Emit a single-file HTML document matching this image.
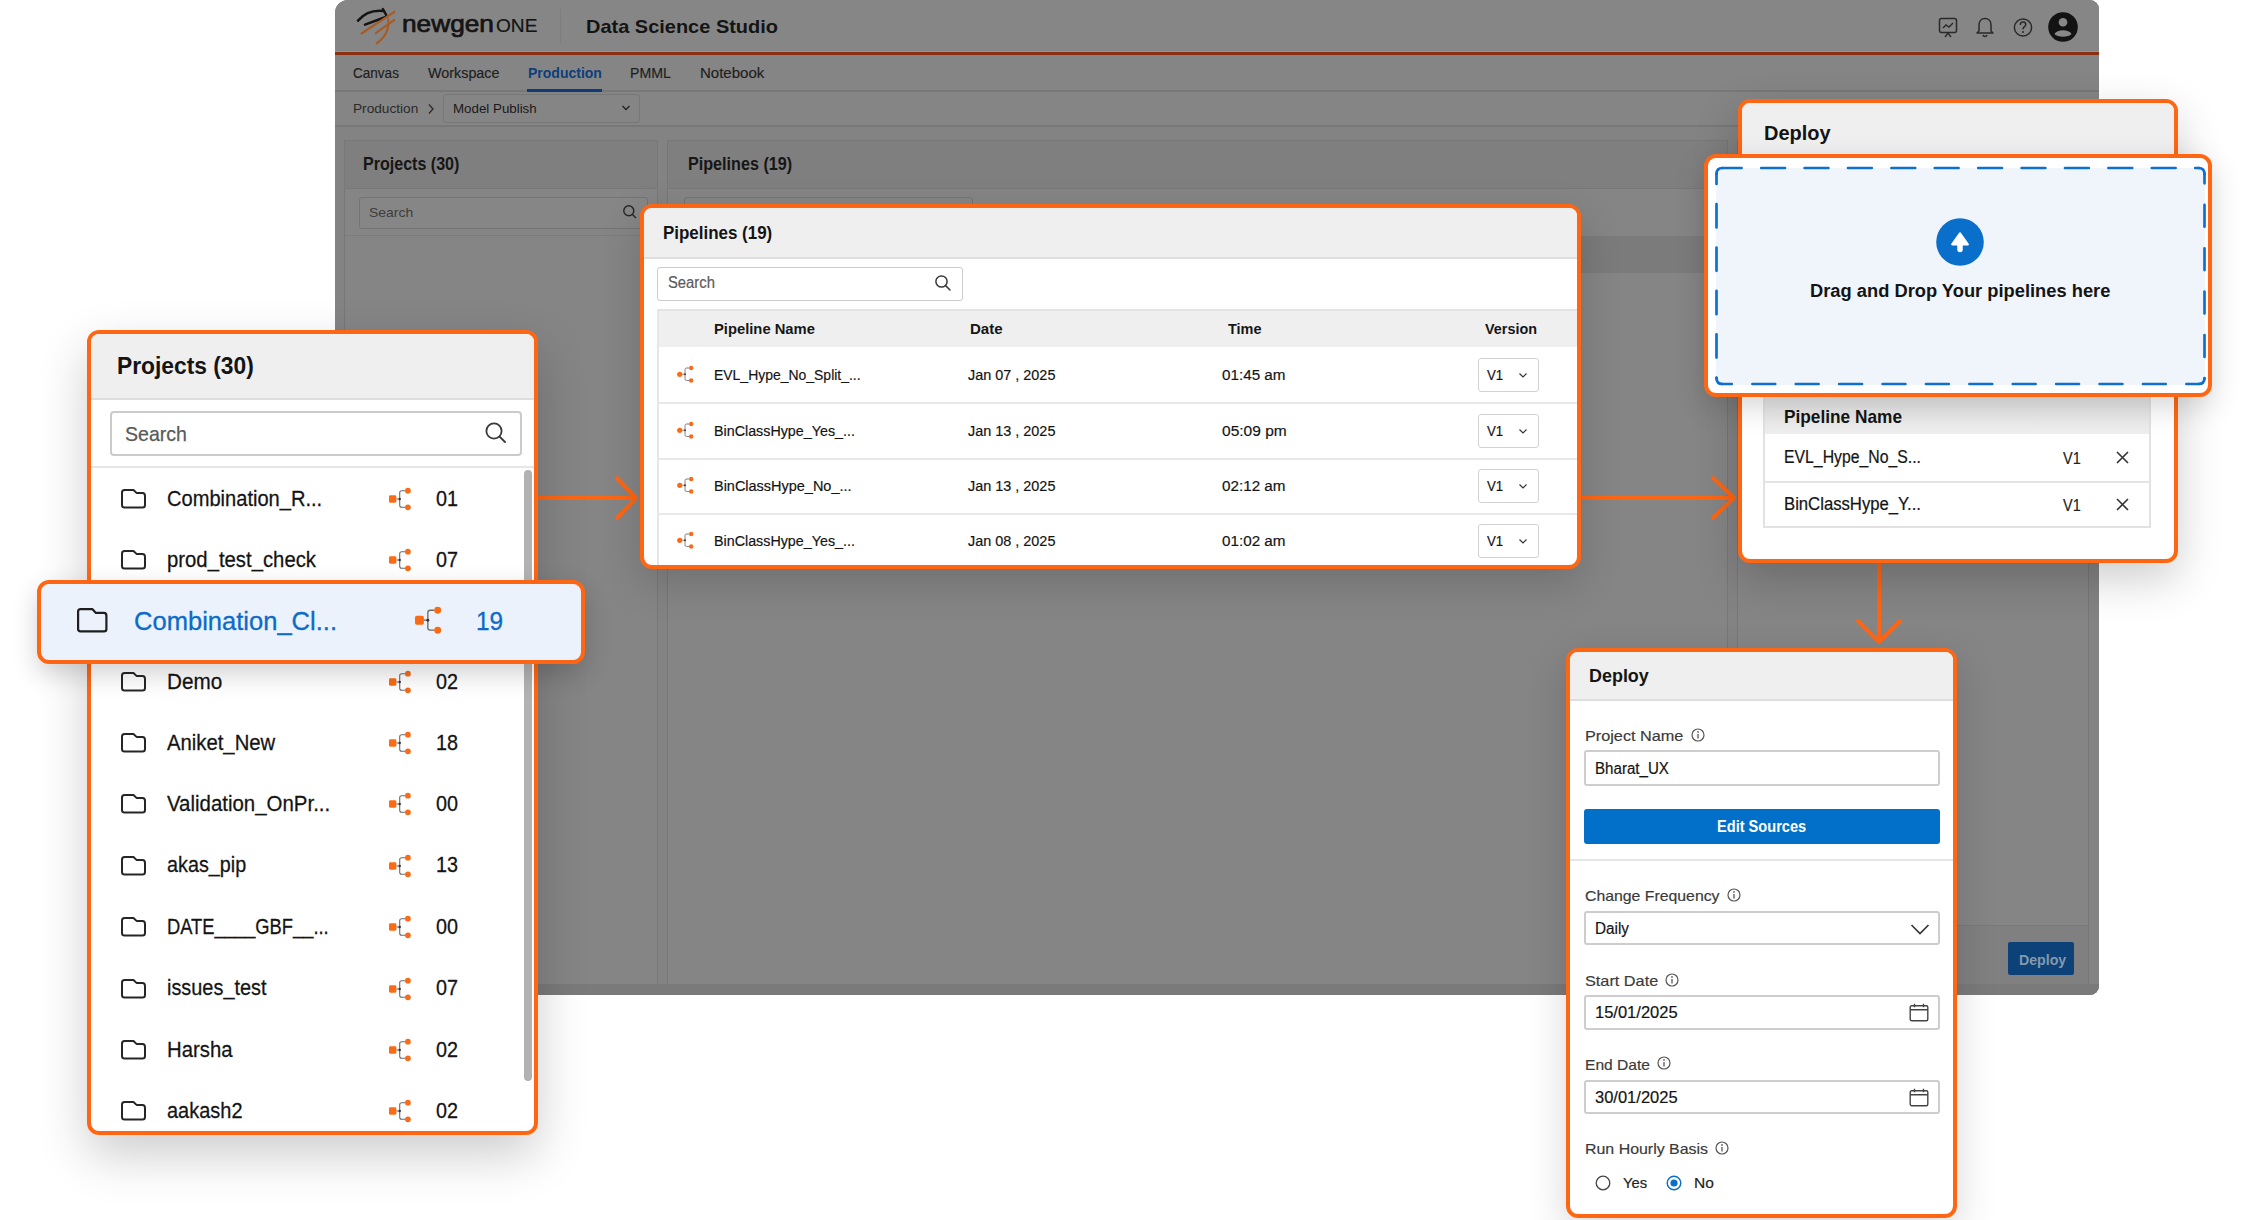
<!DOCTYPE html>
<html><head><meta charset="utf-8">
<style>
*{box-sizing:border-box;margin:0;padding:0}
html,body{width:2252px;height:1220px;overflow:hidden;background:#fff;font-family:"Liberation Sans",sans-serif;color:#141414}
.a{position:absolute}
.t{position:absolute;white-space:nowrap;line-height:1;transform-origin:0 0}
svg{overflow:visible}
.pop{position:absolute;background:#fff;border:4px solid #ff6613;border-radius:12px;overflow:hidden}
.shd{position:absolute;border-radius:12px}
</style></head><body>
<div class="a" style="left:335px;top:0;width:1764px;height:995px;background:#848484;border-radius:13px 9px 9px 13px;overflow:hidden">
<div class="a" style="left:0.00px;top:0.00px;width:1764.00px;height:52.00px;background:#868686"></div>
<div class="a" style="left:0.00px;top:51.00px;width:1764.00px;height:1.00px;background:#8c979c"></div>
<div class="a" style="left:0.00px;top:52.00px;width:1764.00px;height:3.00px;background:#8a3010"></div>
<div class="a" style="left:0.00px;top:55.00px;width:1764.00px;height:36.00px;background:#858585"></div>
<div class="a" style="left:0.00px;top:90.00px;width:1764.00px;height:2.00px;background:#787878"></div>
<div class="a" style="left:0.00px;top:92.00px;width:1764.00px;height:34.00px;background:#858585"></div>
<div class="a" style="left:0.00px;top:125.00px;width:1764.00px;height:2.00px;background:#787878"></div>
<div class="a" style="left:0.00px;top:127.00px;width:1764.00px;height:868.00px;background:#838383"></div>
<div class="a" style="left:9.00px;top:140.00px;width:314.00px;height:845.00px;background:#858585;border:1.5px solid #777"></div>
<div class="a" style="left:332.00px;top:140.00px;width:1061.00px;height:845.00px;background:#858585;border:1.5px solid #777"></div>
<div class="a" style="left:1402.00px;top:140.00px;width:352.00px;height:845.00px;background:#858585;border:1.5px solid #777"></div>
<div class="a" style="left:9.00px;top:140.00px;width:314.00px;height:49.00px;background:#7f7f7f;border:1.5px solid #787878"></div>
<div class="a" style="left:332.00px;top:140.00px;width:1061.00px;height:49.00px;background:#7f7f7f;border:1.5px solid #787878"></div>
<div class="a" style="left:0.00px;top:984.00px;width:1764.00px;height:11.00px;background:#7a7a7a"></div>
<svg class="a" style="left:20.00px;top:5.00px" width="42" height="42" viewBox="0 0 42 42"><path d="M3 15.6 Q13 4 29 6" stroke="#141414" stroke-width="2.6" fill="none" stroke-linecap="round"/>
<path d="M10 19.6 L31.4 11.7" stroke="#141414" stroke-width="2.6" fill="none" stroke-linecap="round"/>
<path d="M27.9 4.1 L31.4 10.3" stroke="#141414" stroke-width="2.4" fill="none" stroke-linecap="round"/>
<path d="M6.5 28.5 L39.4 6.8" stroke="#a85b25" stroke-width="2.1" fill="none" stroke-linecap="round"/>
<path d="M20.8 28.1 L39.4 14.8" stroke="#a85b25" stroke-width="2.1" fill="none" stroke-linecap="round"/>
<path d="M33.2 14.3 Q35 29 21.6 38.3" stroke="#a85b25" stroke-width="2.1" fill="none" stroke-linecap="round"/></svg>
<div class="t" style="left:67.00px;top:13.13px;font-size:23px;color:#141414;-webkit-text-stroke:0.28px #141414;transform:scaleX(1.1406);-webkit-text-stroke:0.7px #141414;">newgen</div>
<div class="t" style="left:160.60px;top:16.94px;font-size:18.5px;color:#141414;-webkit-text-stroke:0.22px #141414;transform:scaleX(1.0327);">ONE</div>
<div class="a" style="left:225.00px;top:9.00px;width:1.00px;height:34.00px;background:#7d7d7d"></div>
<div class="t" style="left:251.00px;top:18.34px;font-size:18.5px;color:#141414;font-weight:bold;transform:scaleX(1.0795);">Data Science Studio</div>
<svg class="a" style="left:1603.00px;top:17.00px" width="20" height="21" viewBox="0 0 20 21"><rect x="1.5" y="1.5" width="17" height="14" rx="2" stroke="#2a2a2a" stroke-width="1.5" fill="none"/><path d="M5 11 L8 8 L11 10 L15 6" stroke="#2a2a2a" stroke-width="1.4" fill="none"/><path d="M7 20 L10 16 L13 20" stroke="#2a2a2a" stroke-width="1.4" fill="none"/></svg>
<svg class="a" style="left:1640.00px;top:16.00px" width="20" height="22" viewBox="0 0 20 22"><path d="M4 15 L4 9 C4 5 6.5 2.5 10 2.5 C13.5 2.5 16 5 16 9 L16 15 L18 17 L2 17 Z" stroke="#2a2a2a" stroke-width="1.5" fill="none" stroke-linejoin="round"/><path d="M8 19 C8.5 21 11.5 21 12 19" stroke="#2a2a2a" stroke-width="1.5" fill="none"/></svg>
<svg class="a" style="left:1678.00px;top:17.00px" width="20" height="21" viewBox="0 0 20 21"><circle cx="10" cy="10.5" r="8.6" stroke="#2a2a2a" stroke-width="1.5" fill="none"/><path d="M7.3 8 C7.3 6 8.6 5 10 5 C11.6 5 12.8 6.1 12.8 7.6 C12.8 9.6 10 9.8 10 12.2" stroke="#2a2a2a" stroke-width="1.5" fill="none"/><circle cx="10" cy="15" r="1" fill="#2a2a2a"/></svg>
<svg class="a" style="left:1713.00px;top:12.00px" width="30" height="30" viewBox="0 0 30 30"><circle cx="15" cy="15" r="14.8" fill="#131313"/><circle cx="15" cy="10.3" r="4.3" fill="#888"/><path d="M6.5 22 C9 17 21 17 23.5 22 C21 25.5 9 25.5 6.5 22 Z" fill="#888"/></svg>
<div class="t" style="left:18.30px;top:65.75px;font-size:14px;color:#1e1e1e;-webkit-text-stroke:0.17px #1e1e1e;transform:scaleX(0.9669);">Canvas</div>
<div class="t" style="left:92.80px;top:65.75px;font-size:14px;color:#1e1e1e;-webkit-text-stroke:0.17px #1e1e1e;transform:scaleX(1.0248);">Workspace</div>
<div class="t" style="left:192.50px;top:65.75px;font-size:14px;color:#0d3f7c;font-weight:bold;transform:scaleX(1.0002);">Production</div>
<div class="t" style="left:295.00px;top:65.75px;font-size:14px;color:#1e1e1e;-webkit-text-stroke:0.17px #1e1e1e;transform:scaleX(1.0111);">PMML</div>
<div class="t" style="left:364.50px;top:65.75px;font-size:14px;color:#1e1e1e;-webkit-text-stroke:0.17px #1e1e1e;transform:scaleX(1.0729);">Notebook</div>
<div class="a" style="left:192.00px;top:89.00px;width:75.00px;height:3.00px;background:#0e3c78"></div>
<div class="t" style="left:18.30px;top:101.97px;font-size:13.5px;color:#2b2b2b;transform:scaleX(1.0117);">Production</div>
<svg class="a" style="left:92.00px;top:103.00px" width="8" height="12" viewBox="0 0 8 12"><path d="M2 1.5 L6 6 L2 10.5" stroke="#2b2b2b" stroke-width="1.3" fill="none"/></svg>
<div class="a" style="left:108.00px;top:94.00px;width:197.00px;height:29.00px;border:1px solid #777;border-radius:3px"></div>
<div class="t" style="left:118.40px;top:101.97px;font-size:13.5px;color:#1a1a1a;transform:scaleX(0.9870);">Model Publish</div>
<svg class="a" style="left:286.00px;top:104.00px" width="10" height="8" viewBox="0 0 10 8"><path d="M1.5 2 L5 5.5 L8.5 2" stroke="#222" stroke-width="1.3" fill="none"/></svg>
<div class="t" style="left:28.40px;top:155.68px;font-size:17.5px;color:#161616;font-weight:bold;transform:scaleX(0.9177);">Projects (30)</div>
<div class="a" style="left:24.00px;top:196.50px;width:289.00px;height:32.00px;border:1px solid #747474;border-radius:3px;background:#868686"></div>
<div class="t" style="left:33.80px;top:205.97px;font-size:13.5px;color:#3d3d3d;transform:scaleX(1.0333);">Search</div>
<svg class="a" style="left:287.00px;top:204.00px" width="16" height="16" viewBox="0 0 16 16"><circle cx="6.8" cy="6.8" r="5" stroke="#262626" stroke-width="1.4" fill="none"/><path d="M10.5 10.5 L14 14" stroke="#262626" stroke-width="1.4"/></svg>
<div class="a" style="left:10.00px;top:234.50px;width:312.00px;height:1.00px;background:#7b7b7b"></div>
<div class="t" style="left:353.40px;top:156.38px;font-size:17.5px;color:#161616;font-weight:bold;transform:scaleX(0.9227);">Pipelines (19)</div>
<div class="a" style="left:349.00px;top:196.50px;width:289.00px;height:32.00px;border:1px solid #747474;border-radius:3px"></div>
<div class="a" style="left:333.00px;top:236.00px;width:1059.00px;height:37.00px;background:#7b7b7b"></div>
<div class="a" style="left:1403.00px;top:925.00px;width:350.00px;height:59.00px;background:#808080;border-top:1px solid #7a7a7a"></div>
<div class="a" style="left:1673.00px;top:942.00px;width:66.00px;height:33.00px;background:#0c4277;border-radius:2px"></div>
<div class="t" style="left:1683.80px;top:952.72px;font-size:14.5px;color:#8399ae;font-weight:bold;transform:scaleX(0.9763);">Deploy</div>
</div>
<svg class="a" style="left:0;top:0" width="2252" height="1220" viewBox="0 0 2252 1220">
<g stroke="#ff6613" stroke-width="4" fill="none" stroke-linecap="round" stroke-linejoin="round">
<path d="M538 498 L636 498 M617 478 L636 498 L617 518"/>
<path d="M1581 498 L1734 498 M1713 478 L1734 498 L1713 518"/>
<path d="M1879 563 L1879 641 M1858 621 L1879 642 L1900 621"/>
</g></svg>
<div class="shd" style="left:87px;top:329.5px;width:451px;height:805px;box-shadow:0 20px 50px rgba(0,0,0,0.20)"></div>
<div class="pop" style="left:87px;top:329.5px;width:451px;height:805px">
<div class="a" style="left:-4.00px;top:-4.00px;width:451.00px;height:68.50px;background:#efefef"></div>
<div class="a" style="left:-4.00px;top:64.50px;width:451.00px;height:2.00px;background:#dedede"></div>
<div class="t" style="left:26.00px;top:21.03px;font-size:23px;color:#141414;font-weight:bold;transform:scaleX(0.9909);">Projects (30)</div>
<div class="a" style="left:19.00px;top:77.00px;width:411.50px;height:45.50px;border:2px solid #cbcbcb;border-radius:4px"></div>
<div class="t" style="left:34.20px;top:89.92px;font-size:21px;color:#5a5a5a;-webkit-text-stroke:0.25px #5a5a5a;transform:scaleX(0.9318);">Search</div>
<svg class="a" style="left:393.00px;top:87.50px" width="24" height="24" viewBox="0 0 24 24"><circle cx="10" cy="10" r="7.6" stroke="#3a3a3a" stroke-width="1.8" fill="none"/><path d="M15.6 15.6 L21 21" stroke="#3a3a3a" stroke-width="1.9" stroke-linecap="round"/></svg>
<div class="a" style="left:-4.00px;top:132.00px;width:451.00px;height:2.00px;background:#e6e6e6"></div>
<div class="a" style="left:433.00px;top:136.50px;width:8.00px;height:611.00px;background:#b2b2b2;border-radius:4px"></div>
<svg class="a" style="left:30.00px;top:155.40px" width="25" height="19.5" viewBox="0 0 25 19.5"><path d="M1.0 16.0 L1.0 3.5 Q1.0 1.0 3.5 1.0 L12.5 1.0 L15.5 3.9000000000000004 L21.5 3.9000000000000004 Q24.0 3.9000000000000004 24.0 6.9 L24.0 16.0 Q24.0 18.5 21.5 18.5 L3.5 18.5 Q1.0 18.5 1.0 16.0 Z" stroke="#262626" stroke-width="2.0" fill="none" stroke-linejoin="round"/></svg>
<div class="t" style="left:75.80px;top:154.27px;font-size:22px;color:#141414;-webkit-text-stroke:0.26px #141414;transform:scaleX(0.9131);">Combination_R...</div>
<svg class="a" style="left:298.00px;top:154.40px" width="24.0" height="22.0" viewBox="0 0 24.0 22.0"><rect x="0" y="7.3" width="7.4" height="7.4" rx="1.4" fill="#fb6a14"/><path d="M7.4 11.0 L10.7 11.0 M13.5 2.6999999999999993 L12.7 2.6999999999999993 Q10.7 2.6999999999999993 10.7 4.7 L10.7 17.3 Q10.7 19.3 12.7 19.3 L16.0 19.3 M13.0 2.6999999999999993 L16.0 2.6999999999999993" stroke="#6a6a6a" stroke-width="1.1" fill="none"/><circle cx="10.7" cy="11.0" r="1.2" fill="#333"/><circle cx="18.9" cy="2.6999999999999993" r="2.9" fill="#fb6a14"/><circle cx="18.9" cy="19.3" r="2.9" fill="#fb6a14"/></svg>
<div class="t" style="left:345.00px;top:154.27px;font-size:22px;color:#141414;-webkit-text-stroke:0.26px #141414;transform:scaleX(0.8990);">01</div>
<svg class="a" style="left:30.00px;top:216.60px" width="25" height="19.5" viewBox="0 0 25 19.5"><path d="M1.0 16.0 L1.0 3.5 Q1.0 1.0 3.5 1.0 L12.5 1.0 L15.5 3.9000000000000004 L21.5 3.9000000000000004 Q24.0 3.9000000000000004 24.0 6.9 L24.0 16.0 Q24.0 18.5 21.5 18.5 L3.5 18.5 Q1.0 18.5 1.0 16.0 Z" stroke="#262626" stroke-width="2.0" fill="none" stroke-linejoin="round"/></svg>
<div class="t" style="left:75.80px;top:215.47px;font-size:22px;color:#141414;-webkit-text-stroke:0.26px #141414;transform:scaleX(0.9230);">prod_test_check</div>
<svg class="a" style="left:298.00px;top:215.60px" width="24.0" height="22.0" viewBox="0 0 24.0 22.0"><rect x="0" y="7.3" width="7.4" height="7.4" rx="1.4" fill="#fb6a14"/><path d="M7.4 11.0 L10.7 11.0 M13.5 2.6999999999999993 L12.7 2.6999999999999993 Q10.7 2.6999999999999993 10.7 4.7 L10.7 17.3 Q10.7 19.3 12.7 19.3 L16.0 19.3 M13.0 2.6999999999999993 L16.0 2.6999999999999993" stroke="#6a6a6a" stroke-width="1.1" fill="none"/><circle cx="10.7" cy="11.0" r="1.2" fill="#333"/><circle cx="18.9" cy="2.6999999999999993" r="2.9" fill="#fb6a14"/><circle cx="18.9" cy="19.3" r="2.9" fill="#fb6a14"/></svg>
<div class="t" style="left:345.00px;top:215.47px;font-size:22px;color:#141414;-webkit-text-stroke:0.26px #141414;transform:scaleX(0.8990);">07</div>
<svg class="a" style="left:30.00px;top:338.90px" width="25" height="19.5" viewBox="0 0 25 19.5"><path d="M1.0 16.0 L1.0 3.5 Q1.0 1.0 3.5 1.0 L12.5 1.0 L15.5 3.9000000000000004 L21.5 3.9000000000000004 Q24.0 3.9000000000000004 24.0 6.9 L24.0 16.0 Q24.0 18.5 21.5 18.5 L3.5 18.5 Q1.0 18.5 1.0 16.0 Z" stroke="#262626" stroke-width="2.0" fill="none" stroke-linejoin="round"/></svg>
<div class="t" style="left:75.80px;top:337.77px;font-size:22px;color:#141414;-webkit-text-stroke:0.26px #141414;transform:scaleX(0.9406);">Demo</div>
<svg class="a" style="left:298.00px;top:337.90px" width="24.0" height="22.0" viewBox="0 0 24.0 22.0"><rect x="0" y="7.3" width="7.4" height="7.4" rx="1.4" fill="#fb6a14"/><path d="M7.4 11.0 L10.7 11.0 M13.5 2.6999999999999993 L12.7 2.6999999999999993 Q10.7 2.6999999999999993 10.7 4.7 L10.7 17.3 Q10.7 19.3 12.7 19.3 L16.0 19.3 M13.0 2.6999999999999993 L16.0 2.6999999999999993" stroke="#6a6a6a" stroke-width="1.1" fill="none"/><circle cx="10.7" cy="11.0" r="1.2" fill="#333"/><circle cx="18.9" cy="2.6999999999999993" r="2.9" fill="#fb6a14"/><circle cx="18.9" cy="19.3" r="2.9" fill="#fb6a14"/></svg>
<div class="t" style="left:345.00px;top:337.77px;font-size:22px;color:#141414;-webkit-text-stroke:0.26px #141414;transform:scaleX(0.8990);">02</div>
<svg class="a" style="left:30.00px;top:399.90px" width="25" height="19.5" viewBox="0 0 25 19.5"><path d="M1.0 16.0 L1.0 3.5 Q1.0 1.0 3.5 1.0 L12.5 1.0 L15.5 3.9000000000000004 L21.5 3.9000000000000004 Q24.0 3.9000000000000004 24.0 6.9 L24.0 16.0 Q24.0 18.5 21.5 18.5 L3.5 18.5 Q1.0 18.5 1.0 16.0 Z" stroke="#262626" stroke-width="2.0" fill="none" stroke-linejoin="round"/></svg>
<div class="t" style="left:75.80px;top:398.77px;font-size:22px;color:#141414;-webkit-text-stroke:0.26px #141414;transform:scaleX(0.9217);">Aniket_New</div>
<svg class="a" style="left:298.00px;top:398.90px" width="24.0" height="22.0" viewBox="0 0 24.0 22.0"><rect x="0" y="7.3" width="7.4" height="7.4" rx="1.4" fill="#fb6a14"/><path d="M7.4 11.0 L10.7 11.0 M13.5 2.6999999999999993 L12.7 2.6999999999999993 Q10.7 2.6999999999999993 10.7 4.7 L10.7 17.3 Q10.7 19.3 12.7 19.3 L16.0 19.3 M13.0 2.6999999999999993 L16.0 2.6999999999999993" stroke="#6a6a6a" stroke-width="1.1" fill="none"/><circle cx="10.7" cy="11.0" r="1.2" fill="#333"/><circle cx="18.9" cy="2.6999999999999993" r="2.9" fill="#fb6a14"/><circle cx="18.9" cy="19.3" r="2.9" fill="#fb6a14"/></svg>
<div class="t" style="left:345.00px;top:398.77px;font-size:22px;color:#141414;-webkit-text-stroke:0.26px #141414;transform:scaleX(0.8990);">18</div>
<svg class="a" style="left:30.00px;top:460.80px" width="25" height="19.5" viewBox="0 0 25 19.5"><path d="M1.0 16.0 L1.0 3.5 Q1.0 1.0 3.5 1.0 L12.5 1.0 L15.5 3.9000000000000004 L21.5 3.9000000000000004 Q24.0 3.9000000000000004 24.0 6.9 L24.0 16.0 Q24.0 18.5 21.5 18.5 L3.5 18.5 Q1.0 18.5 1.0 16.0 Z" stroke="#262626" stroke-width="2.0" fill="none" stroke-linejoin="round"/></svg>
<div class="t" style="left:75.80px;top:459.67px;font-size:22px;color:#141414;-webkit-text-stroke:0.26px #141414;transform:scaleX(0.9288);">Validation_OnPr...</div>
<svg class="a" style="left:298.00px;top:459.80px" width="24.0" height="22.0" viewBox="0 0 24.0 22.0"><rect x="0" y="7.3" width="7.4" height="7.4" rx="1.4" fill="#fb6a14"/><path d="M7.4 11.0 L10.7 11.0 M13.5 2.6999999999999993 L12.7 2.6999999999999993 Q10.7 2.6999999999999993 10.7 4.7 L10.7 17.3 Q10.7 19.3 12.7 19.3 L16.0 19.3 M13.0 2.6999999999999993 L16.0 2.6999999999999993" stroke="#6a6a6a" stroke-width="1.1" fill="none"/><circle cx="10.7" cy="11.0" r="1.2" fill="#333"/><circle cx="18.9" cy="2.6999999999999993" r="2.9" fill="#fb6a14"/><circle cx="18.9" cy="19.3" r="2.9" fill="#fb6a14"/></svg>
<div class="t" style="left:345.00px;top:459.67px;font-size:22px;color:#141414;-webkit-text-stroke:0.26px #141414;transform:scaleX(0.8990);">00</div>
<svg class="a" style="left:30.00px;top:522.00px" width="25" height="19.5" viewBox="0 0 25 19.5"><path d="M1.0 16.0 L1.0 3.5 Q1.0 1.0 3.5 1.0 L12.5 1.0 L15.5 3.9000000000000004 L21.5 3.9000000000000004 Q24.0 3.9000000000000004 24.0 6.9 L24.0 16.0 Q24.0 18.5 21.5 18.5 L3.5 18.5 Q1.0 18.5 1.0 16.0 Z" stroke="#262626" stroke-width="2.0" fill="none" stroke-linejoin="round"/></svg>
<div class="t" style="left:75.80px;top:520.87px;font-size:22px;color:#141414;-webkit-text-stroke:0.26px #141414;transform:scaleX(0.8993);">akas_pip</div>
<svg class="a" style="left:298.00px;top:521.00px" width="24.0" height="22.0" viewBox="0 0 24.0 22.0"><rect x="0" y="7.3" width="7.4" height="7.4" rx="1.4" fill="#fb6a14"/><path d="M7.4 11.0 L10.7 11.0 M13.5 2.6999999999999993 L12.7 2.6999999999999993 Q10.7 2.6999999999999993 10.7 4.7 L10.7 17.3 Q10.7 19.3 12.7 19.3 L16.0 19.3 M13.0 2.6999999999999993 L16.0 2.6999999999999993" stroke="#6a6a6a" stroke-width="1.1" fill="none"/><circle cx="10.7" cy="11.0" r="1.2" fill="#333"/><circle cx="18.9" cy="2.6999999999999993" r="2.9" fill="#fb6a14"/><circle cx="18.9" cy="19.3" r="2.9" fill="#fb6a14"/></svg>
<div class="t" style="left:345.00px;top:520.87px;font-size:22px;color:#141414;-webkit-text-stroke:0.26px #141414;transform:scaleX(0.8990);">13</div>
<svg class="a" style="left:30.00px;top:583.90px" width="25" height="19.5" viewBox="0 0 25 19.5"><path d="M1.0 16.0 L1.0 3.5 Q1.0 1.0 3.5 1.0 L12.5 1.0 L15.5 3.9000000000000004 L21.5 3.9000000000000004 Q24.0 3.9000000000000004 24.0 6.9 L24.0 16.0 Q24.0 18.5 21.5 18.5 L3.5 18.5 Q1.0 18.5 1.0 16.0 Z" stroke="#262626" stroke-width="2.0" fill="none" stroke-linejoin="round"/></svg>
<div class="t" style="left:75.80px;top:582.77px;font-size:22px;color:#141414;-webkit-text-stroke:0.26px #141414;transform:scaleX(0.8334);">DATE____GBF__...</div>
<svg class="a" style="left:298.00px;top:582.90px" width="24.0" height="22.0" viewBox="0 0 24.0 22.0"><rect x="0" y="7.3" width="7.4" height="7.4" rx="1.4" fill="#fb6a14"/><path d="M7.4 11.0 L10.7 11.0 M13.5 2.6999999999999993 L12.7 2.6999999999999993 Q10.7 2.6999999999999993 10.7 4.7 L10.7 17.3 Q10.7 19.3 12.7 19.3 L16.0 19.3 M13.0 2.6999999999999993 L16.0 2.6999999999999993" stroke="#6a6a6a" stroke-width="1.1" fill="none"/><circle cx="10.7" cy="11.0" r="1.2" fill="#333"/><circle cx="18.9" cy="2.6999999999999993" r="2.9" fill="#fb6a14"/><circle cx="18.9" cy="19.3" r="2.9" fill="#fb6a14"/></svg>
<div class="t" style="left:345.00px;top:582.77px;font-size:22px;color:#141414;-webkit-text-stroke:0.26px #141414;transform:scaleX(0.8990);">00</div>
<svg class="a" style="left:30.00px;top:645.00px" width="25" height="19.5" viewBox="0 0 25 19.5"><path d="M1.0 16.0 L1.0 3.5 Q1.0 1.0 3.5 1.0 L12.5 1.0 L15.5 3.9000000000000004 L21.5 3.9000000000000004 Q24.0 3.9000000000000004 24.0 6.9 L24.0 16.0 Q24.0 18.5 21.5 18.5 L3.5 18.5 Q1.0 18.5 1.0 16.0 Z" stroke="#262626" stroke-width="2.0" fill="none" stroke-linejoin="round"/></svg>
<div class="t" style="left:75.80px;top:643.87px;font-size:22px;color:#141414;-webkit-text-stroke:0.26px #141414;transform:scaleX(0.9041);">issues_test</div>
<svg class="a" style="left:298.00px;top:644.00px" width="24.0" height="22.0" viewBox="0 0 24.0 22.0"><rect x="0" y="7.3" width="7.4" height="7.4" rx="1.4" fill="#fb6a14"/><path d="M7.4 11.0 L10.7 11.0 M13.5 2.6999999999999993 L12.7 2.6999999999999993 Q10.7 2.6999999999999993 10.7 4.7 L10.7 17.3 Q10.7 19.3 12.7 19.3 L16.0 19.3 M13.0 2.6999999999999993 L16.0 2.6999999999999993" stroke="#6a6a6a" stroke-width="1.1" fill="none"/><circle cx="10.7" cy="11.0" r="1.2" fill="#333"/><circle cx="18.9" cy="2.6999999999999993" r="2.9" fill="#fb6a14"/><circle cx="18.9" cy="19.3" r="2.9" fill="#fb6a14"/></svg>
<div class="t" style="left:345.00px;top:643.87px;font-size:22px;color:#141414;-webkit-text-stroke:0.26px #141414;transform:scaleX(0.8990);">07</div>
<svg class="a" style="left:30.00px;top:706.20px" width="25" height="19.5" viewBox="0 0 25 19.5"><path d="M1.0 16.0 L1.0 3.5 Q1.0 1.0 3.5 1.0 L12.5 1.0 L15.5 3.9000000000000004 L21.5 3.9000000000000004 Q24.0 3.9000000000000004 24.0 6.9 L24.0 16.0 Q24.0 18.5 21.5 18.5 L3.5 18.5 Q1.0 18.5 1.0 16.0 Z" stroke="#262626" stroke-width="2.0" fill="none" stroke-linejoin="round"/></svg>
<div class="t" style="left:75.80px;top:705.07px;font-size:22px;color:#141414;-webkit-text-stroke:0.26px #141414;transform:scaleX(0.9235);">Harsha</div>
<svg class="a" style="left:298.00px;top:705.20px" width="24.0" height="22.0" viewBox="0 0 24.0 22.0"><rect x="0" y="7.3" width="7.4" height="7.4" rx="1.4" fill="#fb6a14"/><path d="M7.4 11.0 L10.7 11.0 M13.5 2.6999999999999993 L12.7 2.6999999999999993 Q10.7 2.6999999999999993 10.7 4.7 L10.7 17.3 Q10.7 19.3 12.7 19.3 L16.0 19.3 M13.0 2.6999999999999993 L16.0 2.6999999999999993" stroke="#6a6a6a" stroke-width="1.1" fill="none"/><circle cx="10.7" cy="11.0" r="1.2" fill="#333"/><circle cx="18.9" cy="2.6999999999999993" r="2.9" fill="#fb6a14"/><circle cx="18.9" cy="19.3" r="2.9" fill="#fb6a14"/></svg>
<div class="t" style="left:345.00px;top:705.07px;font-size:22px;color:#141414;-webkit-text-stroke:0.26px #141414;transform:scaleX(0.8990);">02</div>
<svg class="a" style="left:30.00px;top:767.40px" width="25" height="19.5" viewBox="0 0 25 19.5"><path d="M1.0 16.0 L1.0 3.5 Q1.0 1.0 3.5 1.0 L12.5 1.0 L15.5 3.9000000000000004 L21.5 3.9000000000000004 Q24.0 3.9000000000000004 24.0 6.9 L24.0 16.0 Q24.0 18.5 21.5 18.5 L3.5 18.5 Q1.0 18.5 1.0 16.0 Z" stroke="#262626" stroke-width="2.0" fill="none" stroke-linejoin="round"/></svg>
<div class="t" style="left:75.80px;top:766.27px;font-size:22px;color:#141414;-webkit-text-stroke:0.26px #141414;transform:scaleX(0.9077);">aakash2</div>
<svg class="a" style="left:298.00px;top:766.40px" width="24.0" height="22.0" viewBox="0 0 24.0 22.0"><rect x="0" y="7.3" width="7.4" height="7.4" rx="1.4" fill="#fb6a14"/><path d="M7.4 11.0 L10.7 11.0 M13.5 2.6999999999999993 L12.7 2.6999999999999993 Q10.7 2.6999999999999993 10.7 4.7 L10.7 17.3 Q10.7 19.3 12.7 19.3 L16.0 19.3 M13.0 2.6999999999999993 L16.0 2.6999999999999993" stroke="#6a6a6a" stroke-width="1.1" fill="none"/><circle cx="10.7" cy="11.0" r="1.2" fill="#333"/><circle cx="18.9" cy="2.6999999999999993" r="2.9" fill="#fb6a14"/><circle cx="18.9" cy="19.3" r="2.9" fill="#fb6a14"/></svg>
<div class="t" style="left:345.00px;top:766.27px;font-size:22px;color:#141414;-webkit-text-stroke:0.26px #141414;transform:scaleX(0.8990);">02</div>
</div>
<div class="shd" style="left:640px;top:204px;width:941px;height:365px;box-shadow:0 14px 40px rgba(0,0,0,0.16)"></div>
<div class="pop" style="left:640px;top:204px;width:941px;height:365px">
<div class="a" style="left:-4.00px;top:-4.00px;width:941.00px;height:52.50px;background:#efefef"></div>
<div class="a" style="left:-4.00px;top:48.50px;width:941.00px;height:2.00px;background:#dedede"></div>
<div class="t" style="left:18.80px;top:15.84px;font-size:18.5px;color:#141414;font-weight:bold;transform:scaleX(0.9156);">Pipelines (19)</div>
<div class="a" style="left:12.50px;top:58.50px;width:306.50px;height:34.00px;border:1.5px solid #cbcbcb;border-radius:3px"></div>
<div class="t" style="left:24.00px;top:67.45px;font-size:16px;color:#5a5a5a;-webkit-text-stroke:0.19px #5a5a5a;transform:scaleX(0.9251);">Search</div>
<svg class="a" style="left:290.00px;top:66.00px" width="18" height="18" viewBox="0 0 18 18"><circle cx="7.5" cy="7.5" r="5.6" stroke="#3a3a3a" stroke-width="1.5" fill="none"/><path d="M11.6 11.6 L16 16" stroke="#3a3a3a" stroke-width="1.5" stroke-linecap="round"/></svg>
<div class="a" style="left:12.50px;top:100.50px;width:920.50px;height:38.50px;background:#efefef;border-top:2px solid #e3e3e3"></div>
<div class="a" style="left:12.50px;top:100.50px;width:2.00px;height:256.50px;background:#e6e6e6"></div>
<div class="t" style="left:70.00px;top:112.88px;font-size:15.5px;color:#161616;font-weight:bold;transform:scaleX(0.9523);">Pipeline Name</div>
<div class="t" style="left:326.40px;top:112.88px;font-size:15.5px;color:#161616;font-weight:bold;transform:scaleX(0.9703);">Date</div>
<div class="t" style="left:584.00px;top:112.88px;font-size:15.5px;color:#161616;font-weight:bold;transform:scaleX(0.9332);">Time</div>
<div class="t" style="left:841.00px;top:112.88px;font-size:15.5px;color:#161616;font-weight:bold;transform:scaleX(0.9286);">Version</div>
<svg class="a" style="left:33.00px;top:158.25px" width="18.0" height="16.5" viewBox="0 0 18.0 16.5"><circle cx="2.7750000000000004" cy="8.25" r="2.625" fill="#fb6a14"/><path d="M5.550000000000001 8.25 L8.024999999999999 8.25 M10.125 2.0249999999999995 L9.524999999999999 2.0249999999999995 Q8.024999999999999 2.0249999999999995 8.024999999999999 3.5250000000000004 L8.024999999999999 12.975 Q8.024999999999999 14.475000000000001 9.524999999999999 14.475000000000001 L12.0 14.475000000000001 M9.75 2.0249999999999995 L12.0 2.0249999999999995" stroke="#6a6a6a" stroke-width="0.8250000000000001" fill="none"/><circle cx="8.024999999999999" cy="8.25" r="0.8999999999999999" fill="#333"/><circle cx="14.174999999999999" cy="2.0249999999999995" r="2.175" fill="#fb6a14"/><circle cx="14.174999999999999" cy="14.475000000000001" r="2.175" fill="#fb6a14"/></svg>
<div class="t" style="left:70.40px;top:158.88px;font-size:15.5px;color:#141414;-webkit-text-stroke:0.19px #141414;transform:scaleX(0.9002);">EVL_Hype_No_Split_...</div>
<div class="t" style="left:324.20px;top:158.88px;font-size:15.5px;color:#141414;-webkit-text-stroke:0.19px #141414;transform:scaleX(0.9304);">Jan 07 , 2025</div>
<div class="t" style="left:578.30px;top:158.88px;font-size:15.5px;color:#141414;-webkit-text-stroke:0.19px #141414;transform:scaleX(0.9826);">01:45 am</div>
<div class="a" style="left:834.00px;top:149.50px;width:61.00px;height:34.00px;border:1.5px solid #d2d2d2;border-radius:3px"></div>
<div class="t" style="left:843.00px;top:159.30px;font-size:15px;color:#141414;-webkit-text-stroke:0.18px #141414;transform:scaleX(0.8829);">V1</div>
<svg class="a" style="left:874.00px;top:164.00px" width="10" height="7" viewBox="0 0 10 7"><path d="M1.5 1.5 L5 5 L8.5 1.5" stroke="#333" stroke-width="1.2" fill="none"/></svg>
<div class="a" style="left:12.50px;top:194.00px;width:920.50px;height:2.00px;background:#e8e8e8"></div>
<svg class="a" style="left:33.00px;top:214.25px" width="18.0" height="16.5" viewBox="0 0 18.0 16.5"><circle cx="2.7750000000000004" cy="8.25" r="2.625" fill="#fb6a14"/><path d="M5.550000000000001 8.25 L8.024999999999999 8.25 M10.125 2.0249999999999995 L9.524999999999999 2.0249999999999995 Q8.024999999999999 2.0249999999999995 8.024999999999999 3.5250000000000004 L8.024999999999999 12.975 Q8.024999999999999 14.475000000000001 9.524999999999999 14.475000000000001 L12.0 14.475000000000001 M9.75 2.0249999999999995 L12.0 2.0249999999999995" stroke="#6a6a6a" stroke-width="0.8250000000000001" fill="none"/><circle cx="8.024999999999999" cy="8.25" r="0.8999999999999999" fill="#333"/><circle cx="14.174999999999999" cy="2.0249999999999995" r="2.175" fill="#fb6a14"/><circle cx="14.174999999999999" cy="14.475000000000001" r="2.175" fill="#fb6a14"/></svg>
<div class="t" style="left:70.40px;top:214.88px;font-size:15.5px;color:#141414;-webkit-text-stroke:0.19px #141414;transform:scaleX(0.9222);">BinClassHype_Yes_...</div>
<div class="t" style="left:324.20px;top:214.88px;font-size:15.5px;color:#141414;-webkit-text-stroke:0.19px #141414;transform:scaleX(0.9304);">Jan 13 , 2025</div>
<div class="t" style="left:578.30px;top:214.88px;font-size:15.5px;color:#141414;-webkit-text-stroke:0.19px #141414;transform:scaleX(1.0011);">05:09 pm</div>
<div class="a" style="left:834.00px;top:205.50px;width:61.00px;height:34.00px;border:1.5px solid #d2d2d2;border-radius:3px"></div>
<div class="t" style="left:843.00px;top:215.30px;font-size:15px;color:#141414;-webkit-text-stroke:0.18px #141414;transform:scaleX(0.8829);">V1</div>
<svg class="a" style="left:874.00px;top:220.00px" width="10" height="7" viewBox="0 0 10 7"><path d="M1.5 1.5 L5 5 L8.5 1.5" stroke="#333" stroke-width="1.2" fill="none"/></svg>
<div class="a" style="left:12.50px;top:250.00px;width:920.50px;height:2.00px;background:#e8e8e8"></div>
<svg class="a" style="left:33.00px;top:269.25px" width="18.0" height="16.5" viewBox="0 0 18.0 16.5"><circle cx="2.7750000000000004" cy="8.25" r="2.625" fill="#fb6a14"/><path d="M5.550000000000001 8.25 L8.024999999999999 8.25 M10.125 2.0249999999999995 L9.524999999999999 2.0249999999999995 Q8.024999999999999 2.0249999999999995 8.024999999999999 3.5250000000000004 L8.024999999999999 12.975 Q8.024999999999999 14.475000000000001 9.524999999999999 14.475000000000001 L12.0 14.475000000000001 M9.75 2.0249999999999995 L12.0 2.0249999999999995" stroke="#6a6a6a" stroke-width="0.8250000000000001" fill="none"/><circle cx="8.024999999999999" cy="8.25" r="0.8999999999999999" fill="#333"/><circle cx="14.174999999999999" cy="2.0249999999999995" r="2.175" fill="#fb6a14"/><circle cx="14.174999999999999" cy="14.475000000000001" r="2.175" fill="#fb6a14"/></svg>
<div class="t" style="left:70.40px;top:269.88px;font-size:15.5px;color:#141414;-webkit-text-stroke:0.19px #141414;transform:scaleX(0.9333);">BinClassHype_No_...</div>
<div class="t" style="left:324.20px;top:269.88px;font-size:15.5px;color:#141414;-webkit-text-stroke:0.19px #141414;transform:scaleX(0.9304);">Jan 13 , 2025</div>
<div class="t" style="left:578.30px;top:269.88px;font-size:15.5px;color:#141414;-webkit-text-stroke:0.19px #141414;transform:scaleX(0.9826);">02:12 am</div>
<div class="a" style="left:834.00px;top:260.50px;width:61.00px;height:34.00px;border:1.5px solid #d2d2d2;border-radius:3px"></div>
<div class="t" style="left:843.00px;top:270.30px;font-size:15px;color:#141414;-webkit-text-stroke:0.18px #141414;transform:scaleX(0.8829);">V1</div>
<svg class="a" style="left:874.00px;top:275.00px" width="10" height="7" viewBox="0 0 10 7"><path d="M1.5 1.5 L5 5 L8.5 1.5" stroke="#333" stroke-width="1.2" fill="none"/></svg>
<div class="a" style="left:12.50px;top:305.00px;width:920.50px;height:2.00px;background:#e8e8e8"></div>
<svg class="a" style="left:33.00px;top:324.25px" width="18.0" height="16.5" viewBox="0 0 18.0 16.5"><circle cx="2.7750000000000004" cy="8.25" r="2.625" fill="#fb6a14"/><path d="M5.550000000000001 8.25 L8.024999999999999 8.25 M10.125 2.0249999999999995 L9.524999999999999 2.0249999999999995 Q8.024999999999999 2.0249999999999995 8.024999999999999 3.5250000000000004 L8.024999999999999 12.975 Q8.024999999999999 14.475000000000001 9.524999999999999 14.475000000000001 L12.0 14.475000000000001 M9.75 2.0249999999999995 L12.0 2.0249999999999995" stroke="#6a6a6a" stroke-width="0.8250000000000001" fill="none"/><circle cx="8.024999999999999" cy="8.25" r="0.8999999999999999" fill="#333"/><circle cx="14.174999999999999" cy="2.0249999999999995" r="2.175" fill="#fb6a14"/><circle cx="14.174999999999999" cy="14.475000000000001" r="2.175" fill="#fb6a14"/></svg>
<div class="t" style="left:70.40px;top:324.88px;font-size:15.5px;color:#141414;-webkit-text-stroke:0.19px #141414;transform:scaleX(0.9222);">BinClassHype_Yes_...</div>
<div class="t" style="left:324.20px;top:324.88px;font-size:15.5px;color:#141414;-webkit-text-stroke:0.19px #141414;transform:scaleX(0.9304);">Jan 08 , 2025</div>
<div class="t" style="left:578.30px;top:324.88px;font-size:15.5px;color:#141414;-webkit-text-stroke:0.19px #141414;transform:scaleX(0.9826);">01:02 am</div>
<div class="a" style="left:834.00px;top:315.50px;width:61.00px;height:34.00px;border:1.5px solid #d2d2d2;border-radius:3px"></div>
<div class="t" style="left:843.00px;top:325.30px;font-size:15px;color:#141414;-webkit-text-stroke:0.18px #141414;transform:scaleX(0.8829);">V1</div>
<svg class="a" style="left:874.00px;top:330.00px" width="10" height="7" viewBox="0 0 10 7"><path d="M1.5 1.5 L5 5 L8.5 1.5" stroke="#333" stroke-width="1.2" fill="none"/></svg>
</div>
<div class="shd" style="left:1738px;top:99px;width:440px;height:464px;box-shadow:0 16px 45px rgba(0,0,0,0.20)"></div>
<div class="pop" style="left:1738px;top:99px;width:440px;height:464px">
<div class="a" style="left:-4.00px;top:-4.00px;width:440.00px;height:71.00px;background:#efefef"></div>
<div class="t" style="left:22.00px;top:19.57px;font-size:20px;color:#141414;font-weight:bold;transform:scaleX(1.0003);">Deploy</div>
<div class="a" style="left:21.00px;top:287.00px;width:388.00px;height:138.00px;border:2px solid #e2e2e2;background:#fff"></div>
<div class="a" style="left:23.00px;top:293.00px;width:384.00px;height:38.00px;background:linear-gradient(#e4e4e4,#efefef)"></div>
<div class="t" style="left:42.00px;top:304.31px;font-size:19px;color:#141414;font-weight:bold;transform:scaleX(0.9085);">Pipeline Name</div>
<div class="a" style="left:23.00px;top:378.00px;width:384.00px;height:2.00px;background:#e4e4e4"></div>
<div class="t" style="left:42.00px;top:346.18px;font-size:17.5px;color:#141414;-webkit-text-stroke:0.21px #141414;transform:scaleX(0.9027);">EVL_Hype_No_S...</div>
<div class="t" style="left:321.00px;top:346.61px;font-size:17px;color:#222;-webkit-text-stroke:0.20px #222;transform:scaleX(0.8512);">V1</div>
<svg class="a" style="left:374.00px;top:347.50px" width="13" height="13" viewBox="0 0 13 13"><path d="M1 1 L12 12 M12 1 L1 12" stroke="#333" stroke-width="1.6"/></svg>
<div class="t" style="left:42.00px;top:393.18px;font-size:17.5px;color:#141414;-webkit-text-stroke:0.21px #141414;transform:scaleX(0.9537);">BinClassHype_Y...</div>
<div class="t" style="left:321.00px;top:393.61px;font-size:17px;color:#222;-webkit-text-stroke:0.20px #222;transform:scaleX(0.8512);">V1</div>
<svg class="a" style="left:374.00px;top:394.50px" width="13" height="13" viewBox="0 0 13 13"><path d="M1 1 L12 12 M12 1 L1 12" stroke="#333" stroke-width="1.6"/></svg>
</div>
<div class="shd" style="left:1704px;top:154px;width:508px;height:243px;box-shadow:0 10px 30px rgba(0,0,0,0.16)"></div>
<div class="pop" style="left:1704px;top:154px;width:508px;height:243px">
<div class="a" style="left:8.00px;top:9.50px;width:489.00px;height:217.00px;background:#eff5fb;border-radius:6px"></div>
<svg class="a" style="left:-1708.00px;top:-158.00px" width="2252" height="1220" viewBox="0 0 2252 1220"><g stroke="#0f6fd0" stroke-width="2.7" fill="none" stroke-linecap="round">
<path d="M1716.5 174 Q1716.5 168 1722.5 168"/><path d="M2198.5 168 Q2204.5 168 2204.5 174"/>
<path d="M2204.5 378 Q2204.5 384 2198.5 384"/><path d="M1722.5 384 Q1716.5 384 1716.5 378"/>
<path d="M1722 168 H2199" stroke-dasharray="23.8 19.6" stroke-dashoffset="4.2"/>
<path d="M2204.5 173.5 V378.5" stroke-dasharray="21.8 21.6" stroke-dashoffset="12"/>
<path d="M2199 384 H1722" stroke-dasharray="22.8 20.6" stroke-dashoffset="10.2"/>
<path d="M1716.5 173.5 V378.5" stroke-dasharray="23.3 20.1" stroke-dashoffset="12.8"/>
</g></svg>
<svg class="a" style="left:227.50px;top:59.50px" width="48" height="48" viewBox="0 0 48 48"><circle cx="24" cy="24" r="23.8" fill="#0a6fcb"/><path d="M24 15.5 L31.8 26.3 L16.2 26.3 Z" fill="#fff" stroke="#fff" stroke-width="2.2" stroke-linejoin="round"/><path d="M24 25 L24 31.5" stroke="#fff" stroke-width="5.5" stroke-linecap="round"/></svg>
<div class="t" style="left:101.60px;top:124.36px;font-size:18px;color:#141414;font-weight:bold;transform:scaleX(1.0169);">Drag and Drop Your pipelines here</div>
</div>
<div class="shd" style="left:1566px;top:648px;width:391px;height:570px;box-shadow:0 14px 40px rgba(0,0,0,0.16)"></div>
<div class="pop" style="left:1566px;top:648px;width:391px;height:570px">
<div class="a" style="left:-4.00px;top:-4.00px;width:391.00px;height:51.00px;background:#efefef"></div>
<div class="a" style="left:-4.00px;top:47.00px;width:391.00px;height:2.00px;background:#dedede"></div>
<div class="t" style="left:19.40px;top:13.91px;font-size:19px;color:#141414;font-weight:bold;transform:scaleX(0.9440);">Deploy</div>
<div class="t" style="left:15.00px;top:76.30px;font-size:15px;color:#3a3a3a;-webkit-text-stroke:0.18px #3a3a3a;transform:scaleX(1.0818);">Project Name</div>
<svg class="a" style="left:121.00px;top:76.00px" width="14" height="14" viewBox="0 0 14 14"><circle cx="7" cy="7" r="6" stroke="#555" stroke-width="1.2" fill="none"/><path d="M7 6 L7 10.5" stroke="#555" stroke-width="1.3"/><circle cx="7" cy="3.9" r="0.85" fill="#555"/></svg>
<div class="a" style="left:14.00px;top:98.00px;width:356.00px;height:36.00px;border:2px solid #cdcdcd;border-radius:3px"></div>
<div class="t" style="left:25.00px;top:109.45px;font-size:16px;color:#141414;-webkit-text-stroke:0.19px #141414;transform:scaleX(0.9442);">Bharat_UX</div>
<div class="a" style="left:14.00px;top:157.00px;width:356.00px;height:35.00px;background:#0270c9;border-radius:3px"></div>
<div class="t" style="left:147.40px;top:167.25px;font-size:16px;color:#ffffff;font-weight:bold;transform:scaleX(0.9120);">Edit Sources</div>
<div class="a" style="left:-4.00px;top:207.00px;width:391.00px;height:2.00px;background:#e6e6e6"></div>
<div class="t" style="left:15.00px;top:236.30px;font-size:15px;color:#3a3a3a;-webkit-text-stroke:0.18px #3a3a3a;transform:scaleX(1.0542);">Change Frequency</div>
<svg class="a" style="left:156.60px;top:236.00px" width="14" height="14" viewBox="0 0 14 14"><circle cx="7" cy="7" r="6" stroke="#555" stroke-width="1.2" fill="none"/><path d="M7 6 L7 10.5" stroke="#555" stroke-width="1.3"/><circle cx="7" cy="3.9" r="0.85" fill="#555"/></svg>
<div class="a" style="left:14.00px;top:259.00px;width:356.00px;height:34.00px;border:2px solid #cdcdcd;border-radius:3px"></div>
<div class="t" style="left:25.00px;top:269.45px;font-size:16px;color:#141414;-webkit-text-stroke:0.19px #141414;transform:scaleX(0.9560);">Daily</div>
<svg class="a" style="left:340.00px;top:271.00px" width="20" height="13" viewBox="0 0 20 13"><path d="M1.5 2 L10 10.5 L18.5 2" stroke="#333" stroke-width="1.6" fill="none"/></svg>
<div class="t" style="left:15.00px;top:320.80px;font-size:15px;color:#3a3a3a;-webkit-text-stroke:0.18px #3a3a3a;transform:scaleX(1.0840);">Start Date</div>
<svg class="a" style="left:95.00px;top:320.50px" width="14" height="14" viewBox="0 0 14 14"><circle cx="7" cy="7" r="6" stroke="#555" stroke-width="1.2" fill="none"/><path d="M7 6 L7 10.5" stroke="#555" stroke-width="1.3"/><circle cx="7" cy="3.9" r="0.85" fill="#555"/></svg>
<div class="a" style="left:14.00px;top:343.00px;width:356.00px;height:35.00px;border:2px solid #cdcdcd;border-radius:3px"></div>
<div class="t" style="left:25.00px;top:353.45px;font-size:16px;color:#141414;-webkit-text-stroke:0.19px #141414;transform:scaleX(1.0315);">15/01/2025</div>
<svg class="a" style="left:338.50px;top:351.00px" width="20" height="19" viewBox="0 0 20 19"><rect x="1.2" y="2.8" width="17.6" height="15" rx="1.5" stroke="#444" stroke-width="1.4" fill="none"/><path d="M1.2 6.8 L18.8 6.8 M5.5 0.8 L5.5 4.3 M14.5 0.8 L14.5 4.3" stroke="#444" stroke-width="1.4"/></svg>
<div class="t" style="left:15.00px;top:404.60px;font-size:15px;color:#3a3a3a;-webkit-text-stroke:0.18px #3a3a3a;transform:scaleX(1.0393);">End Date</div>
<svg class="a" style="left:87.00px;top:404.30px" width="14" height="14" viewBox="0 0 14 14"><circle cx="7" cy="7" r="6" stroke="#555" stroke-width="1.2" fill="none"/><path d="M7 6 L7 10.5" stroke="#555" stroke-width="1.3"/><circle cx="7" cy="3.9" r="0.85" fill="#555"/></svg>
<div class="a" style="left:14.00px;top:428.00px;width:356.00px;height:34.00px;border:2px solid #cdcdcd;border-radius:3px"></div>
<div class="t" style="left:25.00px;top:438.05px;font-size:16px;color:#141414;-webkit-text-stroke:0.19px #141414;transform:scaleX(1.0315);">30/01/2025</div>
<svg class="a" style="left:338.50px;top:435.50px" width="20" height="19" viewBox="0 0 20 19"><rect x="1.2" y="2.8" width="17.6" height="15" rx="1.5" stroke="#444" stroke-width="1.4" fill="none"/><path d="M1.2 6.8 L18.8 6.8 M5.5 0.8 L5.5 4.3 M14.5 0.8 L14.5 4.3" stroke="#444" stroke-width="1.4"/></svg>
<div class="t" style="left:15.00px;top:489.20px;font-size:15px;color:#3a3a3a;-webkit-text-stroke:0.18px #3a3a3a;transform:scaleX(1.0614);">Run Hourly Basis</div>
<svg class="a" style="left:145.00px;top:488.90px" width="14" height="14" viewBox="0 0 14 14"><circle cx="7" cy="7" r="6" stroke="#555" stroke-width="1.2" fill="none"/><path d="M7 6 L7 10.5" stroke="#555" stroke-width="1.3"/><circle cx="7" cy="3.9" r="0.85" fill="#555"/></svg>
<svg class="a" style="left:25.00px;top:522.50px" width="16" height="16" viewBox="0 0 16 16"><circle cx="8" cy="8" r="6.8" stroke="#444" stroke-width="1.3" fill="#fff"/></svg>
<div class="t" style="left:53.40px;top:522.88px;font-size:15.5px;color:#222;-webkit-text-stroke:0.19px #222;transform:scaleX(0.9531);">Yes</div>
<svg class="a" style="left:96.00px;top:522.50px" width="16" height="16" viewBox="0 0 16 16"><circle cx="8" cy="8" r="6.8" stroke="#0a6fc8" stroke-width="1.4" fill="#fff"/><circle cx="8" cy="8" r="3.6" fill="#0a6fc8"/></svg>
<div class="t" style="left:124.30px;top:522.88px;font-size:15.5px;color:#222;-webkit-text-stroke:0.19px #222;transform:scaleX(1.0043);">No</div>
</div>
<div class="shd" style="left:37px;top:580px;width:548px;height:84px;box-shadow:0 10px 26px rgba(0,0,0,0.18)"></div>
<div class="pop" style="left:37px;top:580px;width:548px;height:84px;background:#ebf2fb">
<svg class="a" style="left:36.00px;top:24.00px" width="30.5" height="24.5" viewBox="0 0 30.5 24.5"><path d="M1.1 21.0 L1.1 3.5 Q1.1 1.1 3.5 1.1 L15.25 1.1 L18.91 4.9 L27.0 4.9 Q29.4 4.9 29.4 7.9 L29.4 21.0 Q29.4 23.4 27.0 23.4 L3.5 23.4 Q1.1 23.4 1.1 21.0 Z" stroke="#1e1e1e" stroke-width="2.2" fill="none" stroke-linejoin="round"/></svg>
<div class="t" style="left:93.00px;top:23.99px;font-size:26px;color:#0b6bc9;-webkit-text-stroke:0.31px #0b6bc9;transform:scaleX(0.9823);">Combination_Cl...</div>
<svg class="a" style="left:373.50px;top:23.30px" width="28.8" height="26.4" viewBox="0 0 28.8 26.4"><rect x="0" y="8.759999999999998" width="8.88" height="8.88" rx="1.68" fill="#fb6a14"/><path d="M8.88 13.2 L12.839999999999998 13.2 M16.2 3.2399999999999984 L15.239999999999998 3.2399999999999984 Q12.839999999999998 3.2399999999999984 12.839999999999998 5.64 L12.839999999999998 20.759999999999998 Q12.839999999999998 23.16 15.239999999999998 23.16 L19.2 23.16 M15.6 3.2399999999999984 L19.2 3.2399999999999984" stroke="#6a6a6a" stroke-width="1.32" fill="none"/><circle cx="12.839999999999998" cy="13.2" r="1.44" fill="#333"/><circle cx="22.679999999999996" cy="3.2399999999999984" r="3.48" fill="#fb6a14"/><circle cx="22.679999999999996" cy="23.16" r="3.48" fill="#fb6a14"/></svg>
<div class="t" style="left:434.80px;top:23.99px;font-size:26px;color:#0b6bc9;-webkit-text-stroke:0.31px #0b6bc9;transform:scaleX(0.9370);">19</div>
</div>
</body></html>
